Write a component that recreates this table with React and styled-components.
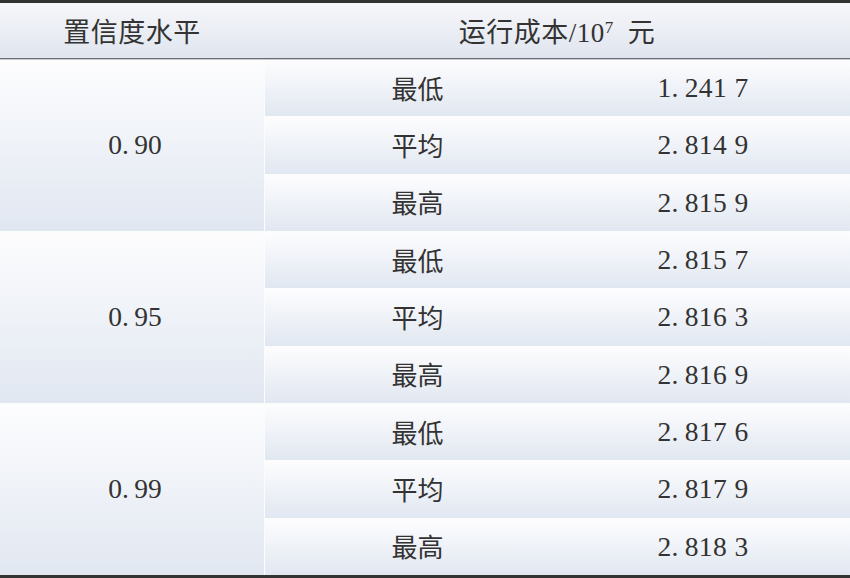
import React from 'react';
import styled, { createGlobalStyle } from 'styled-components';

const Global = createGlobalStyle`
  html, body { margin: 0; padding: 0; background: #ffffff; }
  body { font-family: "Liberation Serif", "Noto Sans CJK SC", serif; color: #333; }
`;

const Table = styled.div`
  width: 850px;
  height: 578px;
  box-sizing: border-box;
  border-top: 3px solid #333;
  border-bottom: 3px solid #333;
  display: flex;
  flex-direction: column;
  background: #fff;
`;

const HeadRow = styled.div`
  display: grid;
  grid-template-columns: 264px 1fr;
  height: 55px;
  border-bottom: 1px solid #6e6e6e;
  background: linear-gradient(to bottom, #f6f7fa 0%, #e9ecf3 60%, #dfe4ee 100%);
  box-shadow: 0 1px 0 #c8ccd4;
`;

const HeadCell = styled.div`
  display: flex;
  align-items: center;
  justify-content: center;
  font-size: 27px;
  letter-spacing: 0.5px;
`;

const Sup = styled.sup`
  font-size: 17px;
  position: relative;
  top: -3px;
  margin-right: 14px;
`;

const Body = styled.div`
  flex: 1;
  display: grid;
  grid-template-columns: 264px 1fr;
  grid-template-rows: repeat(9, 1fr);
  gap: 1px;
  background: #fbfcfe;
  margin-top: 1px;
`;

const cellBg = `linear-gradient(to bottom, #fdfdfe 0%, #f0f3f8 45%, #e1e7f1 100%)`;

const LevelCell = styled.div`
  grid-row: span 3;
  display: flex;
  align-items: center;
  justify-content: center;
  font-size: 27.5px;
  padding-left: 6px;
  background: ${cellBg};
`;

const ValueRow = styled.div`
  display: grid;
  grid-template-columns: 305px 1fr;
  align-items: center;
  background: ${cellBg};
`;

const Kind = styled.span`
  text-align: center;
  font-size: 26px;
  padding-bottom: 2px;
`;

const Cost = styled.span`
  text-align: center;
  font-size: 27.5px;
  padding-right: 14px;
  letter-spacing: 0.4px;
`;

const data = [
  { level: '0.90', rows: [['最低', '1.241 7'], ['平均', '2.814 9'], ['最高', '2.815 9']] },
  { level: '0.95', rows: [['最低', '2.815 7'], ['平均', '2.816 3'], ['最高', '2.816 9']] },
  { level: '0.99', rows: [['最低', '2.817 6'], ['平均', '2.817 9'], ['最高', '2.818 3']] },
];

const fmt = (s) => s.replace('.', '.\u2009');

export default function App() {
  return (
    <>
      <Global />
      <Table>
        <HeadRow>
          <HeadCell>置信度水平</HeadCell>
          <HeadCell>
            运行成本/10<Sup>7</Sup>元
          </HeadCell>
        </HeadRow>
        <Body>
          {data.map((g) => (
            <React.Fragment key={g.level}>
              <LevelCell style={{ gridColumn: 1 }}>{fmt(g.level)}</LevelCell>
              {g.rows.map(([k, v]) => (
                <ValueRow key={k} style={{ gridColumn: 2 }}>
                  <Kind>{k}</Kind>
                  <Cost>{fmt(v)}</Cost>
                </ValueRow>
              ))}
            </React.Fragment>
          ))}
        </Body>
      </Table>
    </>
  );
}
